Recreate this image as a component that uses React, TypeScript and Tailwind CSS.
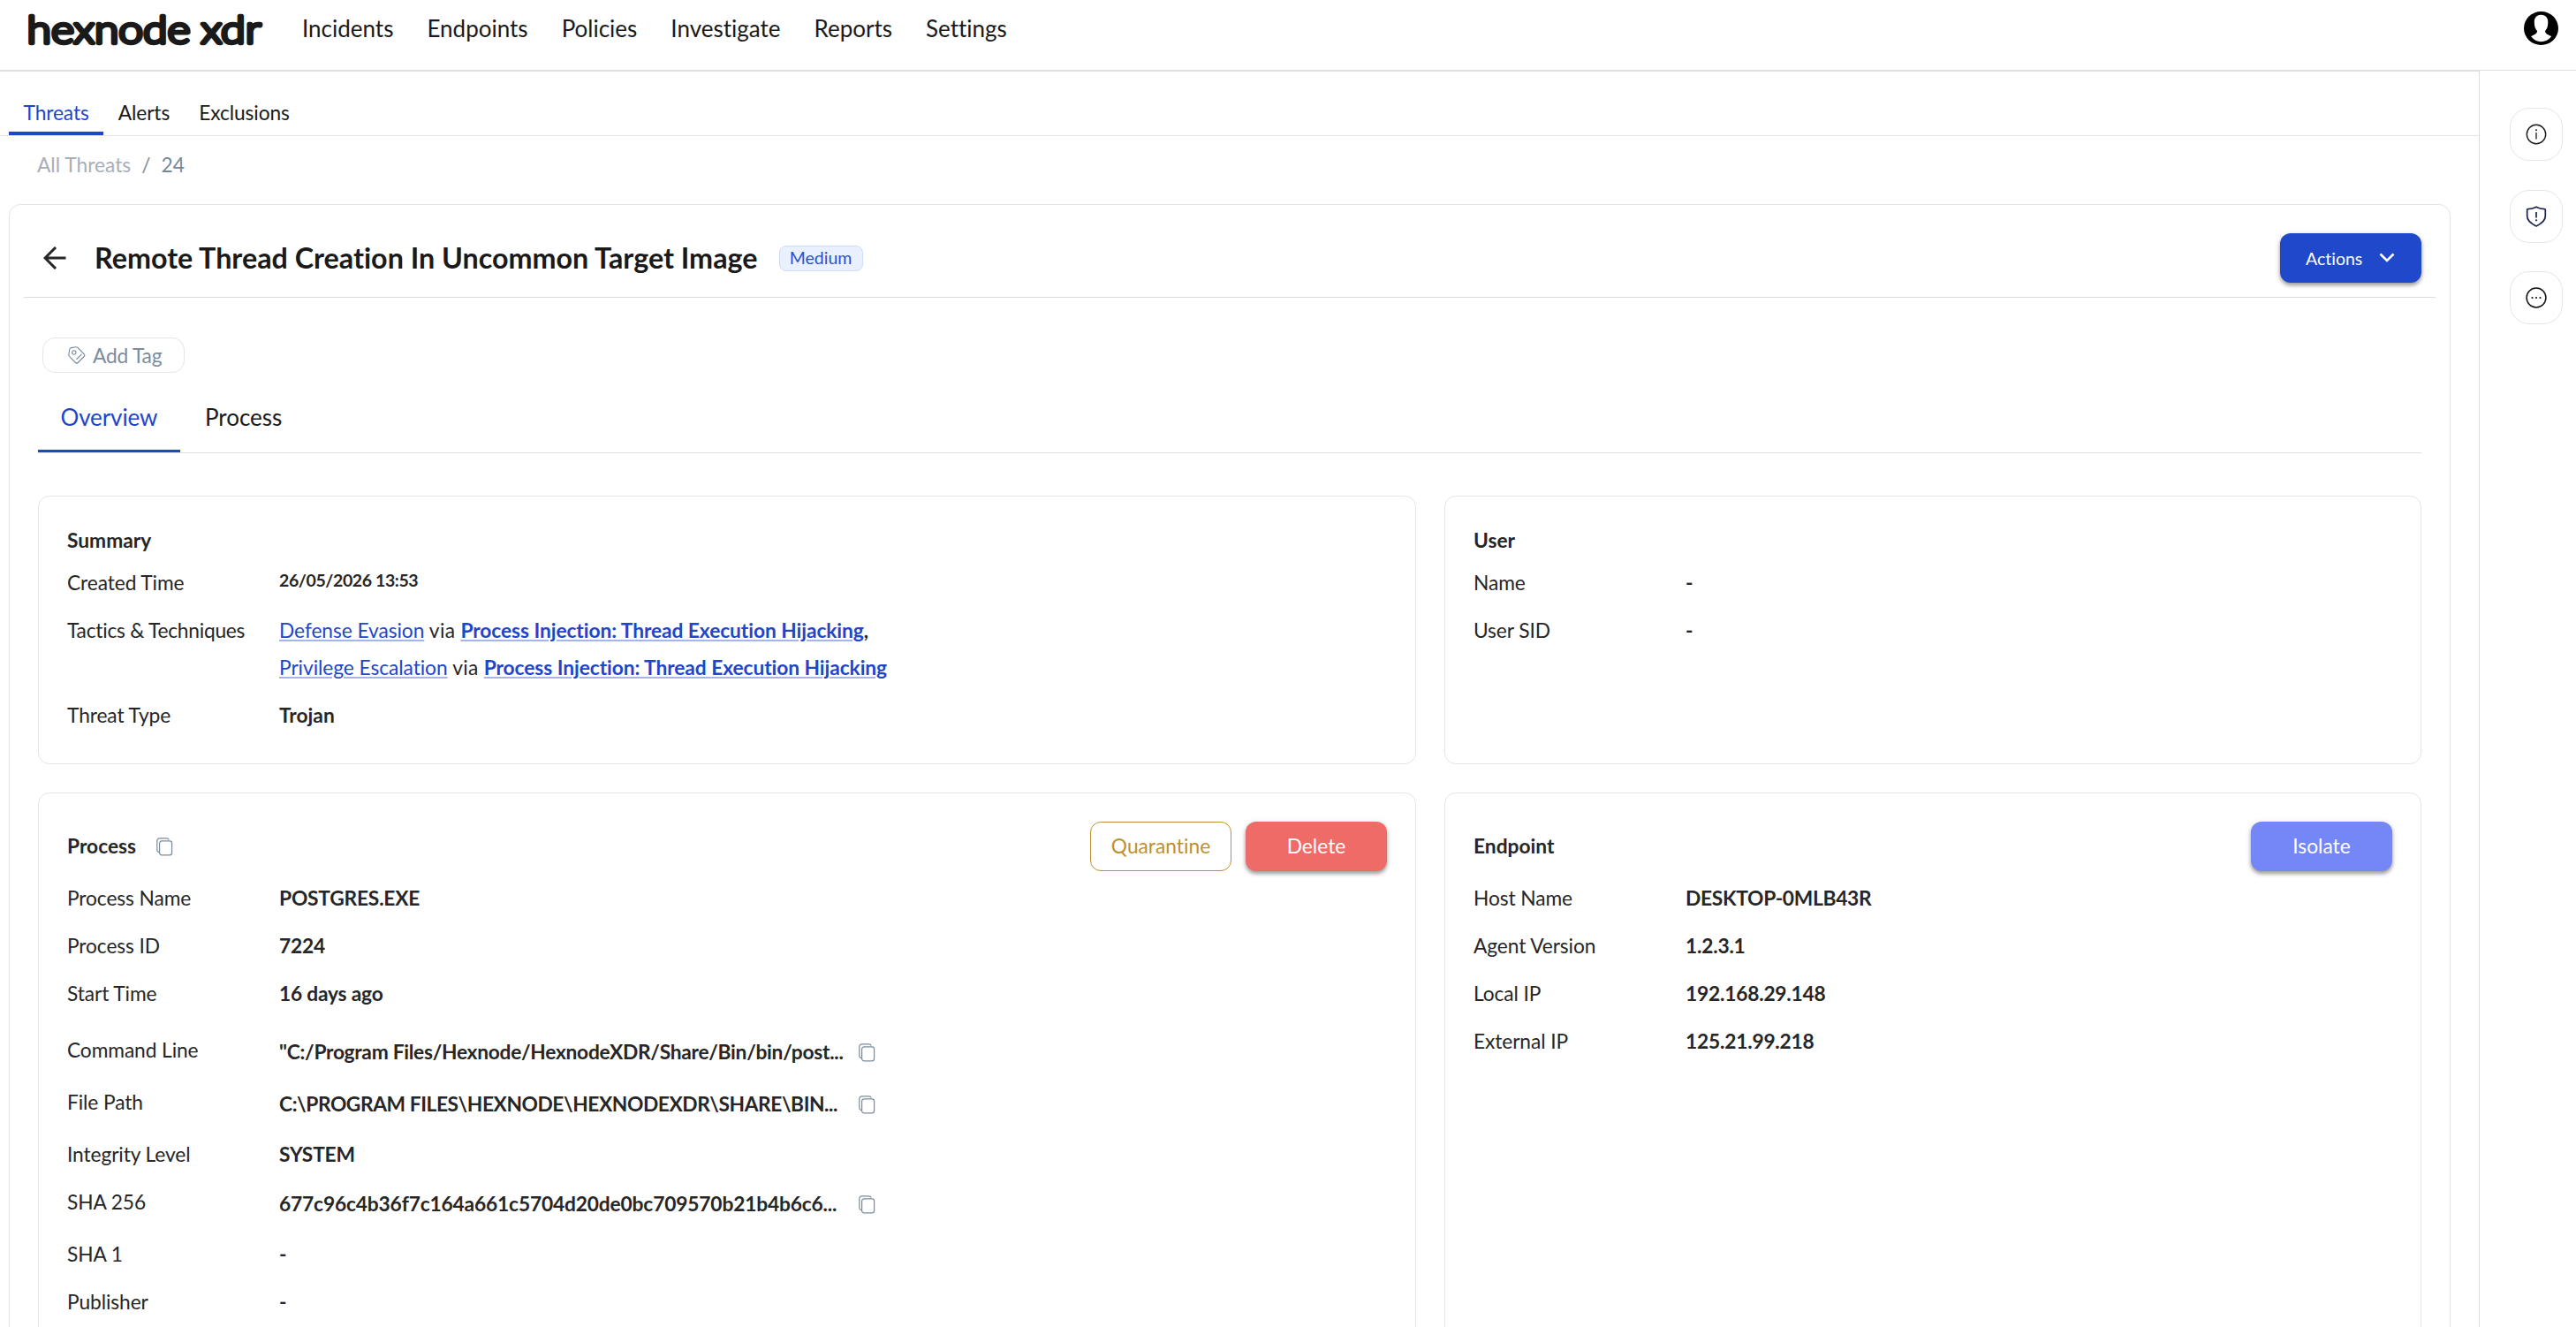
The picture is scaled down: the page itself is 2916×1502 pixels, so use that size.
import type { ReactNode } from 'react';

const NAV = ['Incidents', 'Endpoints', 'Policies', 'Investigate', 'Reports', 'Settings'];
const TABS = ['Threats', 'Alerts', 'Exclusions'];

// Light letters with a round-joined stroke, so the terminals come out soft.
function Logo() {
  return (
    <svg
      width="270"
      height="62"
      viewBox="0 0 270 62"
      className="fill-[#1a1a1a] stroke-[#1a1a1a] font-['Lato',sans-serif] text-[44px] font-light"
      strokeWidth="4.4"
      strokeLinejoin="round"
      strokeLinecap="round"
    >
      <text x="-0.5" y="46.5" textLength="185" lengthAdjust="spacingAndGlyphs">
        hexnode
      </text>
      <text x="196.5" y="46.5" textLength="68" lengthAdjust="spacingAndGlyphs">
        xdr
      </text>
    </svg>
  );
}

function Avatar() {
  return (
    <svg width="39" height="38" viewBox="0 0 39 38">
      <ellipse cx="19.5" cy="19" rx="19.5" ry="19" fill="#000" />
      <path
        fill="#fff"
        d="M19.5 3.8C14 3.8 11.8 7.5 11.8 12c0 5 1.2 8 3.2 10 .5 2.500-3 4.500-7 6 3 4.200 7 6.200 11.500 6.200s8.800-2 11.800-6.200c-4.300-1.500-7.700-3.500-7.200-6 1.900-2 3.200-5 3.200-10 0-4.500-2.300-8.200-7.800-8.200z"
      />
    </svg>
  );
}

function CopyIcon() {
  return (
    <svg width="19" height="21" viewBox="0 0 19 21" fill="none" stroke="#7b8ca0" strokeWidth="1.2">
      <path d="M3.600 16.600H3.400A2.600 2.600 0 0 1 .8 14V3.600A2.800 2.800 0 0 1 3.600.8h8.200a2.600 2.600 0 0 1 2.400 1.800" />
      <rect x="3.600" y="3.800" width="14" height="16" rx="2.600" />
    </svg>
  );
}

function TagIcon() {
  return (
    <svg
      width="20"
      height="20"
      viewBox="0 0 20 20"
      fill="none"
      stroke="#7b8ca0"
      strokeWidth="1.100"
      strokeLinecap="round"
      strokeLinejoin="round"
    >
      <path d="M3.800 1.600 9 .8c.8-.1 1.500.1 2 .7l7.200 7.300c.8.800.8 2 0 2.700l-7 7c-.8.800-1.900.8-2.700 0L1.500 11.300c-.5-.6-.8-1.300-.6-2.100l.7-5.300c.2-1.200 1-2.100 2.200-2.300z" />
      <circle cx="6.800" cy="7" r="2.200" />
      <path d="m9.800 14.500 5.500-5.400" />
    </svg>
  );
}

function InfoIcon() {
  return (
    <svg width="24" height="24" viewBox="0 0 24 24" fill="none" stroke="#1a1a1a">
      <circle cx="12" cy="12" r="10.700" strokeWidth="1.400" />
      <path d="M12 10v7.500" strokeWidth="1.300" />
      <circle cx="12" cy="7.300" r="1" fill="#1a1a1a" stroke="none" />
    </svg>
  );
}

function ShieldIcon() {
  return (
    <svg width="24" height="24" viewBox="0 0 24 24" fill="none" stroke="#1b2450" strokeLinejoin="round">
      <path
        d="M12 1.200c3 1.600 6.200 2.300 9.600 2.500.4 0 .7.300.7.700v7.200c0 5.300-4.800 8.800-10.300 11.300C6.500 20.400 1.700 16.900 1.700 11.600V4.400c0-.4.300-.7.700-.7C5.800 3.500 9 2.800 12 1.200z"
        strokeWidth="1.700"
      />
      <path d="M12 7v6.500" strokeWidth="1.700" />
      <circle cx="12" cy="16.300" r="1.100" fill="#1b2450" stroke="none" />
    </svg>
  );
}

function MoreIcon() {
  return (
    <svg width="24" height="24" viewBox="0 0 24 24" fill="none">
      <circle cx="12" cy="12" r="10.900" stroke="#111" strokeWidth="1.500" />
      <g fill="#111">
        <circle cx="7.500" cy="12" r="1.100" />
        <circle cx="12" cy="12" r="1.100" />
        <circle cx="16.500" cy="12" r="1.100" />
      </g>
    </svg>
  );
}

function RailButton({ children }: { children: ReactNode }) {
  return (
    <button
      type="button"
      className="flex h-[60px] w-[60px] items-center justify-center rounded-[22px] border border-[#e5e6e8]"
    >
      {children}
    </button>
  );
}

function Panel({ className = '', children }: { className?: string; children: ReactNode }) {
  return (
    <section className={`rounded-[13px] border border-[#e4e5e8] px-8 ${className}`}>{children}</section>
  );
}

function Row(props: {
  label: string;
  children: ReactNode;
  className?: string;
  labelTracking?: string;
  valueTracking?: string;
}) {
  return (
    <div className={`flex items-start ${props.className ?? ''}`}>
      <dt className={`w-60 shrink-0 ${props.labelTracking ?? 'tracking-[-0.1px]'}`}>{props.label}</dt>
      <dd className={`font-bold ${props.valueTracking ?? 'tracking-[-0.2px]'}`}>{props.children}</dd>
    </div>
  );
}

/** A clipped value with a copy button after it. */
function CopyRow(props: { label: string; value: string; className?: string; valueTracking?: string }) {
  return (
    <Row
      label={props.label}
      valueTracking={props.valueTracking}
      className={`h-[37px] ${props.className ?? ''}`}
    >
      <div className="flex items-center pt-0.5">
        <span className="w-[656px]">{props.value}</span>
        <button type="button" aria-label="Copy">
          <CopyIcon />
        </button>
      </div>
    </Row>
  );
}

function Technique({ tactic, technique }: { tactic: string; technique: string }) {
  return (
    <>
      <a className="font-normal text-[#1e46ca] underline decoration-[#1e46ca]/40 decoration-2 underline-offset-2">
        {tactic}
      </a>
      <span className="font-normal tracking-[0.3px]"> via </span>
      <a className="text-[#1e46ca] underline decoration-[#1e46ca]/40 decoration-2 underline-offset-2">
        {technique}
      </a>
    </>
  );
}

export default function App() {
  return (
    <div className="flex h-[1502px] w-[2916px] flex-col overflow-hidden bg-white font-['Lato',sans-serif] text-[22.75px] leading-8 text-[#262626] [font-variant-ligatures:none]">
      <header className="flex h-20 shrink-0 border-b border-[#dfdfdf] pl-[31px] text-[26px] text-[#1a1a1a]">
        <div className="pt-0.5">
          <Logo />
        </div>
        <nav className="ml-[41px] flex gap-[38px] pt-4">
          {NAV.map((item) => (
            <a key={item}>{item}</a>
          ))}
        </nav>
        <button type="button" aria-label="Account" className="mr-5 ml-auto h-[38px] pt-[13px]">
          <Avatar />
        </button>
      </header>

      <div className="flex min-h-0 flex-1">
        <main className="w-[2806px] shrink-0 border-t border-[#dfdfdf]">
          <nav className="flex h-[73px] border-b border-[#e3e3e3] pl-2.5 tracking-[-0.1px] text-[#1a1a1a]">
            {TABS.map((tab, i) => (
              <a
                key={tab}
                className={
                  i === 0
                    ? 'border-b-4 border-[#1e46ca] px-[16.5px] pt-[31px] text-[#1e46ca]'
                    : 'px-[16.5px] pt-[31px]'
                }
              >
                {tab}
              </a>
            ))}
          </nav>
          <div className="flex gap-3 pt-[17px] pl-[42px] text-[#a8aeb8]">
            <a>All Threats</a>
            <span className="text-[#868b93]">/</span>
            <span className="text-[#76889b]">24</span>
          </div>

          <div className="mt-7 ml-2.5 h-[1400px] w-[2764px] rounded-[13px] border border-[#e4e4e6] px-4">
            <div className="flex h-[105px] items-center border-b border-[#dcdcdc] pt-4 pr-4 pl-[22px]">
              <svg
                width="26"
                height="26"
                viewBox="0 0 26 26"
                fill="none"
                stroke="#262626"
                strokeWidth="3"
                className="shrink-0"
              >
                <path d="M25.500 13H2.500M14 1 2 13l12 12" />
              </svg>
              <h1 className="ml-8 text-[32.28px] font-bold text-[#1a1a1a]">
                Remote Thread Creation In Uncommon Target Image
              </h1>
              <span className="ml-6 flex h-[29px] w-[95px] items-center justify-center rounded-lg border border-[#cfdbfb] bg-[#e9f0ff] text-[19.5px] text-[#2a50d0]">
                Medium
              </span>
              <button
                type="button"
                className="ml-auto flex h-14 w-40 items-center rounded-xl bg-[#1f48ca] pl-[29px] text-[19.5px] text-white shadow-[0_3px_4px_rgba(0,0,0,0.35),0_1px_8px_rgba(0,0,0,0.1)]"
              >
                <span className="pt-0.5">Actions</span>
                <svg
                  width="18"
                  height="12"
                  viewBox="0 0 18 12"
                  fill="none"
                  stroke="#fff"
                  strokeWidth="2.600"
                  className="ml-[19px]"
                >
                  <path d="m1.500 1.500 7.500 7.500 7.500-7.500" />
                </svg>
              </button>
            </div>

            <div className="px-4">
              <button
                type="button"
                className="mt-[45px] ml-[5px] flex h-10 w-[161px] items-center rounded-[14px] border border-[#e4e5e8] pl-7 text-[#7b8ca0]"
              >
                <TagIcon />
                <span className="mt-0.5 ml-2 tracking-[-0.2px]">Add Tag</span>
              </button>

              <nav className="mt-[31px] flex h-[60px] border-b border-[#dfdfdf] pt-[3px] text-[26px] text-[#1a1a1a]">
                <a className="border-b-[3px] border-[#1e46ca] px-[25.500px] tracking-[-0.1px] text-[#1e46ca]">
                  Overview
                </a>
                <a className="px-[28px]">Process</a>
              </nav>

              <div className="mt-12 grid grid-cols-[1560px_1106px] gap-8">
                <Panel className="h-[304px] pt-[34px]">
                  <h2 className="mb-4 font-bold">Summary</h2>
                  <dl className="flex flex-col gap-[22px]">
                    <Row label="Created Time" className="h-8">
                      <span className="block text-[19.5px] leading-[25px] tracking-[-0.4px]">
                        26/05/2026 13:53
                      </span>
                    </Row>
                    <Row
                      label="Tactics & Techniques"
                      labelTracking="tracking-[-0.25px]"
                      valueTracking="tracking-[-0.07px]"
                    >
                      <ul className="-my-[5px] leading-[42px]">
                        <li>
                          <Technique
                            tactic="Defense Evasion"
                            technique="Process Injection: Thread Execution Hijacking"
                          />
                          ,
                        </li>
                        <li>
                          <Technique
                            tactic="Privilege Escalation"
                            technique="Process Injection: Thread Execution Hijacking"
                          />
                        </li>
                      </ul>
                    </Row>
                    <Row label="Threat Type" valueTracking="tracking-normal">
                      Trojan
                    </Row>
                  </dl>
                </Panel>

                <Panel className="h-[304px] pt-[34px]">
                  <h2 className="mb-4 font-bold">User</h2>
                  <dl className="flex flex-col gap-[22px]">
                    <Row label="Name">-</Row>
                    <Row label="User SID">-</Row>
                  </dl>
                </Panel>

                <Panel className="h-[700px] pt-8">
                  <div className="mb-[15px] flex items-center">
                    <h2 className="font-bold">Process</h2>
                    <button type="button" aria-label="Copy" className="ml-[23px]">
                      <CopyIcon />
                    </button>
                    <button
                      type="button"
                      className="ml-auto h-14 w-40 rounded-xl border border-[#bf902f] text-[#bf902f]"
                    >
                      Quarantine
                    </button>
                    <button
                      type="button"
                      className="ml-4 h-14 w-40 rounded-xl bg-[#ee6b67] text-white shadow-[0_3px_4px_rgba(0,0,0,0.35),0_1px_8px_rgba(0,0,0,0.1)]"
                    >
                      Delete
                    </button>
                  </div>
                  <dl className="flex flex-col gap-[22px]">
                    <Row label="Process Name">POSTGRES.EXE</Row>
                    <Row label="Process ID">7224</Row>
                    <Row label="Start Time">16 days ago</Row>
                    <CopyRow
                      className="mt-2.5"
                      label="Command Line"
                      value={'"C:/Program Files/Hexnode/HexnodeXDR/Share/Bin/bin/post...'}
                      valueTracking="tracking-[-0.28px]"
                    />
                    <CopyRow
                      label="File Path"
                      value={'C:\\PROGRAM FILES\\HEXNODE\\HEXNODEXDR\\SHARE\\BIN...'}
                      valueTracking="tracking-[-0.42px]"
                    />
                    <Row label="Integrity Level">SYSTEM</Row>
                    <CopyRow
                      label="SHA 256"
                      value="677c96c4b36f7c164a661c5704d20de0bc709570b21b4b6c6..."
                      valueTracking="tracking-[-0.16px]"
                    />
                    <Row label="SHA 1">-</Row>
                    <Row label="Publisher">-</Row>
                  </dl>
                </Panel>

                <Panel className="h-[700px] pt-8">
                  <div className="mb-[15px] flex items-center justify-between">
                    <h2 className="font-bold">Endpoint</h2>
                    <button
                      type="button"
                      className="h-14 w-40 rounded-xl bg-[#7587f7] text-white shadow-[0_3px_4px_rgba(0,0,0,0.35),0_1px_8px_rgba(0,0,0,0.1)]"
                    >
                      Isolate
                    </button>
                  </div>
                  <dl className="flex flex-col gap-[22px]">
                    <Row label="Host Name" valueTracking="tracking-[-0.3px]">
                      DESKTOP-0MLB43R
                    </Row>
                    <Row label="Agent Version">1.2.3.1</Row>
                    <Row label="Local IP">192.168.29.148</Row>
                    <Row label="External IP">125.21.99.218</Row>
                  </dl>
                </Panel>
              </div>
            </div>
          </div>
        </main>

        <aside className="flex flex-1 flex-col gap-[32.500px] border-l border-[#dfdfdf] pt-[42px] pl-[34px]">
          <RailButton>
            <InfoIcon />
          </RailButton>
          <RailButton>
            <ShieldIcon />
          </RailButton>
          <RailButton>
            <MoreIcon />
          </RailButton>
        </aside>
      </div>
    </div>
  );
}
